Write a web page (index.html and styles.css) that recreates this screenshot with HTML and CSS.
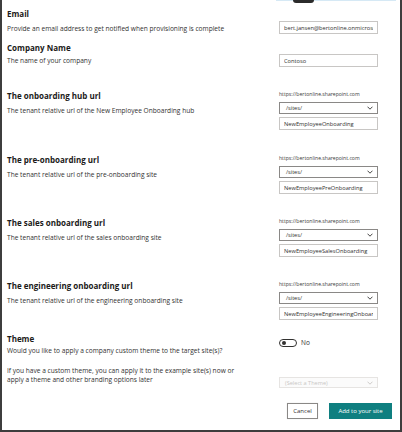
FILE: index.html
```html
<!DOCTYPE html>
<html lang="en">
<head>
<meta charset="utf-8">
<title>Site settings</title>
<link rel="stylesheet" href="styles.css">
</head>
<body>
<div class="frame">
  <div class="topbar"></div>
  <div class="notch"></div>

  <div class="row row-email">
    <div class="label">
      <h2>Email</h2>
      <p class="desc">Provide an email address to get notified when provisioning is complete</p>
    </div>
    <div class="ctrl"><input class="input" type="text" value="bert.jansen@bertonline.onmicrosoft.com"></div>
  </div>

  <div class="row row-company">
    <div class="label">
      <h2>Company Name</h2>
      <p class="desc">The name of your company</p>
    </div>
    <div class="ctrl"><input class="input" type="text" value="Contoso"></div>
  </div>

  <div class="row row-url row-hub">
    <div class="label">
      <h2>The onboarding hub url</h2>
      <p class="desc">The tenant relative url of the New Employee Onboarding hub</p>
    </div>
    <div class="ctrl">
      <div class="host">https://bertonline.sharepoint.com</div>
      <div class="select"><span>/sites/</span><svg class="chev" width="6" height="4" viewBox="0 0 6 4"><path d="M0.5 0.7 L3 3.2 L5.5 0.7" fill="none" stroke="#323130" stroke-width="0.9"/></svg></div>
      <input class="input url-input" type="text" value="NewEmployeeOnboarding">
    </div>
  </div>

  <div class="row row-url row-pre">
    <div class="label">
      <h2>The pre-onboarding url</h2>
      <p class="desc">The tenant relative url of the pre-onboarding site</p>
    </div>
    <div class="ctrl">
      <div class="host">https://bertonline.sharepoint.com</div>
      <div class="select"><span>/sites/</span><svg class="chev" width="6" height="4" viewBox="0 0 6 4"><path d="M0.5 0.7 L3 3.2 L5.5 0.7" fill="none" stroke="#323130" stroke-width="0.9"/></svg></div>
      <input class="input url-input" type="text" value="NewEmployeePreOnboarding">
    </div>
  </div>

  <div class="row row-url">
    <div class="label">
      <h2>The sales onboarding url</h2>
      <p class="desc">The tenant relative url of the sales onboarding site</p>
    </div>
    <div class="ctrl">
      <div class="host">https://bertonline.sharepoint.com</div>
      <div class="select"><span>/sites/</span><svg class="chev" width="6" height="4" viewBox="0 0 6 4"><path d="M0.5 0.7 L3 3.2 L5.5 0.7" fill="none" stroke="#323130" stroke-width="0.9"/></svg></div>
      <input class="input url-input" type="text" value="NewEmployeeSalesOnboarding">
    </div>
  </div>

  <div class="row row-url">
    <div class="label">
      <h2>The engineering onboarding url</h2>
      <p class="desc">The tenant relative url of the engineering onboarding site</p>
    </div>
    <div class="ctrl">
      <div class="host">https://bertonline.sharepoint.com</div>
      <div class="select"><span>/sites/</span><svg class="chev" width="6" height="4" viewBox="0 0 6 4"><path d="M0.5 0.7 L3 3.2 L5.5 0.7" fill="none" stroke="#323130" stroke-width="0.9"/></svg></div>
      <input class="input url-input" type="text" value="NewEmployeeEngineeringOnboarding">
    </div>
  </div>

  <div class="row row-theme">
    <div class="label">
      <h2>Theme</h2>
      <p class="desc">Would you like to apply a company custom theme to the target site(s)?</p>
    </div>
    <div class="ctrl toggle-wrap">
      <span class="toggle"><span class="knob"></span></span>
      <span class="toggle-text">No</span>
    </div>
  </div>

  <div class="row row-para">
    <div class="label">
      <p class="desc para">If you have a custom theme, you can apply it to the example site(s) now or<br>apply a theme and other branding options later</p>
    </div>
    <div class="ctrl">
      <div class="select select-disabled"><span>(Select a Theme)</span><svg class="chev" width="6" height="4" viewBox="0 0 6 4"><path d="M0.5 0.7 L3 3.2 L5.5 0.7" fill="none" stroke="#c8c6c4" stroke-width="0.9"/></svg></div>
    </div>
  </div>

  <div class="actions">
    <button class="btn btn-cancel" type="button">Cancel</button>
    <button class="btn btn-primary" type="button">Add to your site</button>
  </div>
</div>
</body>
</html>
```

FILE: styles.css
```css
* { box-sizing: border-box; margin: 0; padding: 0; }
html, body { width: 402px; height: 432px; overflow: hidden; background: #fff; }
body { font-family: "Open Sans", "Noto Sans", sans-serif; color: #323130; }

.frame {
  position: relative;
  width: 402px;
  height: 432px;
  border: 2px solid #3d3d3d;
  border-top: 0;
  padding: 9px 0 0 5px;
}
.topbar {
  position: absolute;
  top: 0;
  left: 274px;
  width: 120px;
  height: 1px;
  background: #d6e9f5;
}
.notch {
  position: absolute;
  top: 0;
  left: 291px;
  width: 21px;
  height: 3px;
  background: #2b2b2b;
  border-radius: 0 0 4px 4px;
}

.row { display: flex; }
.label { flex: 1; }
.ctrl { width: 99px; margin-right: 22px; }

h2 {
  font-size: 8px;
  line-height: 10px;
  font-weight: 700;
  color: #1b1a19;
}
.desc {
  font-size: 6.6px;
  line-height: 9px;
  color: #323130;
}

.input {
  display: block;
  width: 100%;
  height: 13px;
  border: 1px solid #c8c6c4;
  border-radius: 0;
  padding: 0 4px;
  font-family: "Open Sans", "Noto Sans", sans-serif;
  font-size: 5.7px;
  color: #323130;
  background: #fff;
  outline: none;
}

.row-email .desc { margin-top: 5px; }
.row-email .ctrl { padding-top: 12px; }

.row-company { margin-top: 9px; }
.row-company .desc { margin-top: 3px; }
.row-company .ctrl { padding-top: 11px; }

.row-url { margin-top: 24px; }
.row-pre { margin-top: 25px; }
.row-url .desc { margin-top: 5px; }

.host {
  font-size: 5.1px;
  line-height: 7px;
  color: #3b3a39;
}
.select {
  margin-top: 4px;
  height: 12px;
  border: 1px solid #8a8886;
  display: flex;
  align-items: center;
  justify-content: space-between;
  padding: 0 4px 0 6px;
  font-size: 5.6px;
  color: #323130;
  background: #fff;
}
.chev { display: block; }
.url-input { margin-top: 3px; }

.row-theme { margin-top: 14px; }
.row-theme .desc { margin-top: 2px; }
.toggle-wrap {
  padding-top: 5px;
  display: flex;
  align-items: flex-start;
  gap: 4px;
}
.toggle {
  width: 18px;
  height: 8px;
  border: 1px solid #323130;
  border-radius: 5px;
  display: flex;
  align-items: center;
  padding-left: 2px;
}
.knob {
  width: 4px;
  height: 4px;
  border-radius: 50%;
  background: #323130;
}
.toggle-text {
  font-size: 6.5px;
  line-height: 8px;
  color: #323130;
}

.row-para { margin-top: 11px; }
.row-para .ctrl { padding-top: 11px; }
.select-disabled {
  margin-top: 0;
  height: 11px;
  border-color: #e6e4e2;
  background: #fbfbfb;
  color: #c8c6c4;
  padding-left: 5px;
}

.actions {
  margin-top: 15px;
  display: flex;
  justify-content: flex-end;
  gap: 11px;
  margin-right: 8px;
}
.btn {
  height: 16px;
  font-family: "Open Sans", "Noto Sans", sans-serif;
  font-size: 6px;
  display: flex;
  align-items: center;
  justify-content: center;
}
.btn-cancel {
  width: 31px;
  border: 1px solid #8a8886;
  background: #fff;
  color: #323130;
  box-shadow: 0 0 1px rgba(0,0,0,0.15);
}
.btn-primary {
  width: 63px;
  border: 1px solid #0f7f80;
  background: #0f7f80;
  color: #fff;
}
```
